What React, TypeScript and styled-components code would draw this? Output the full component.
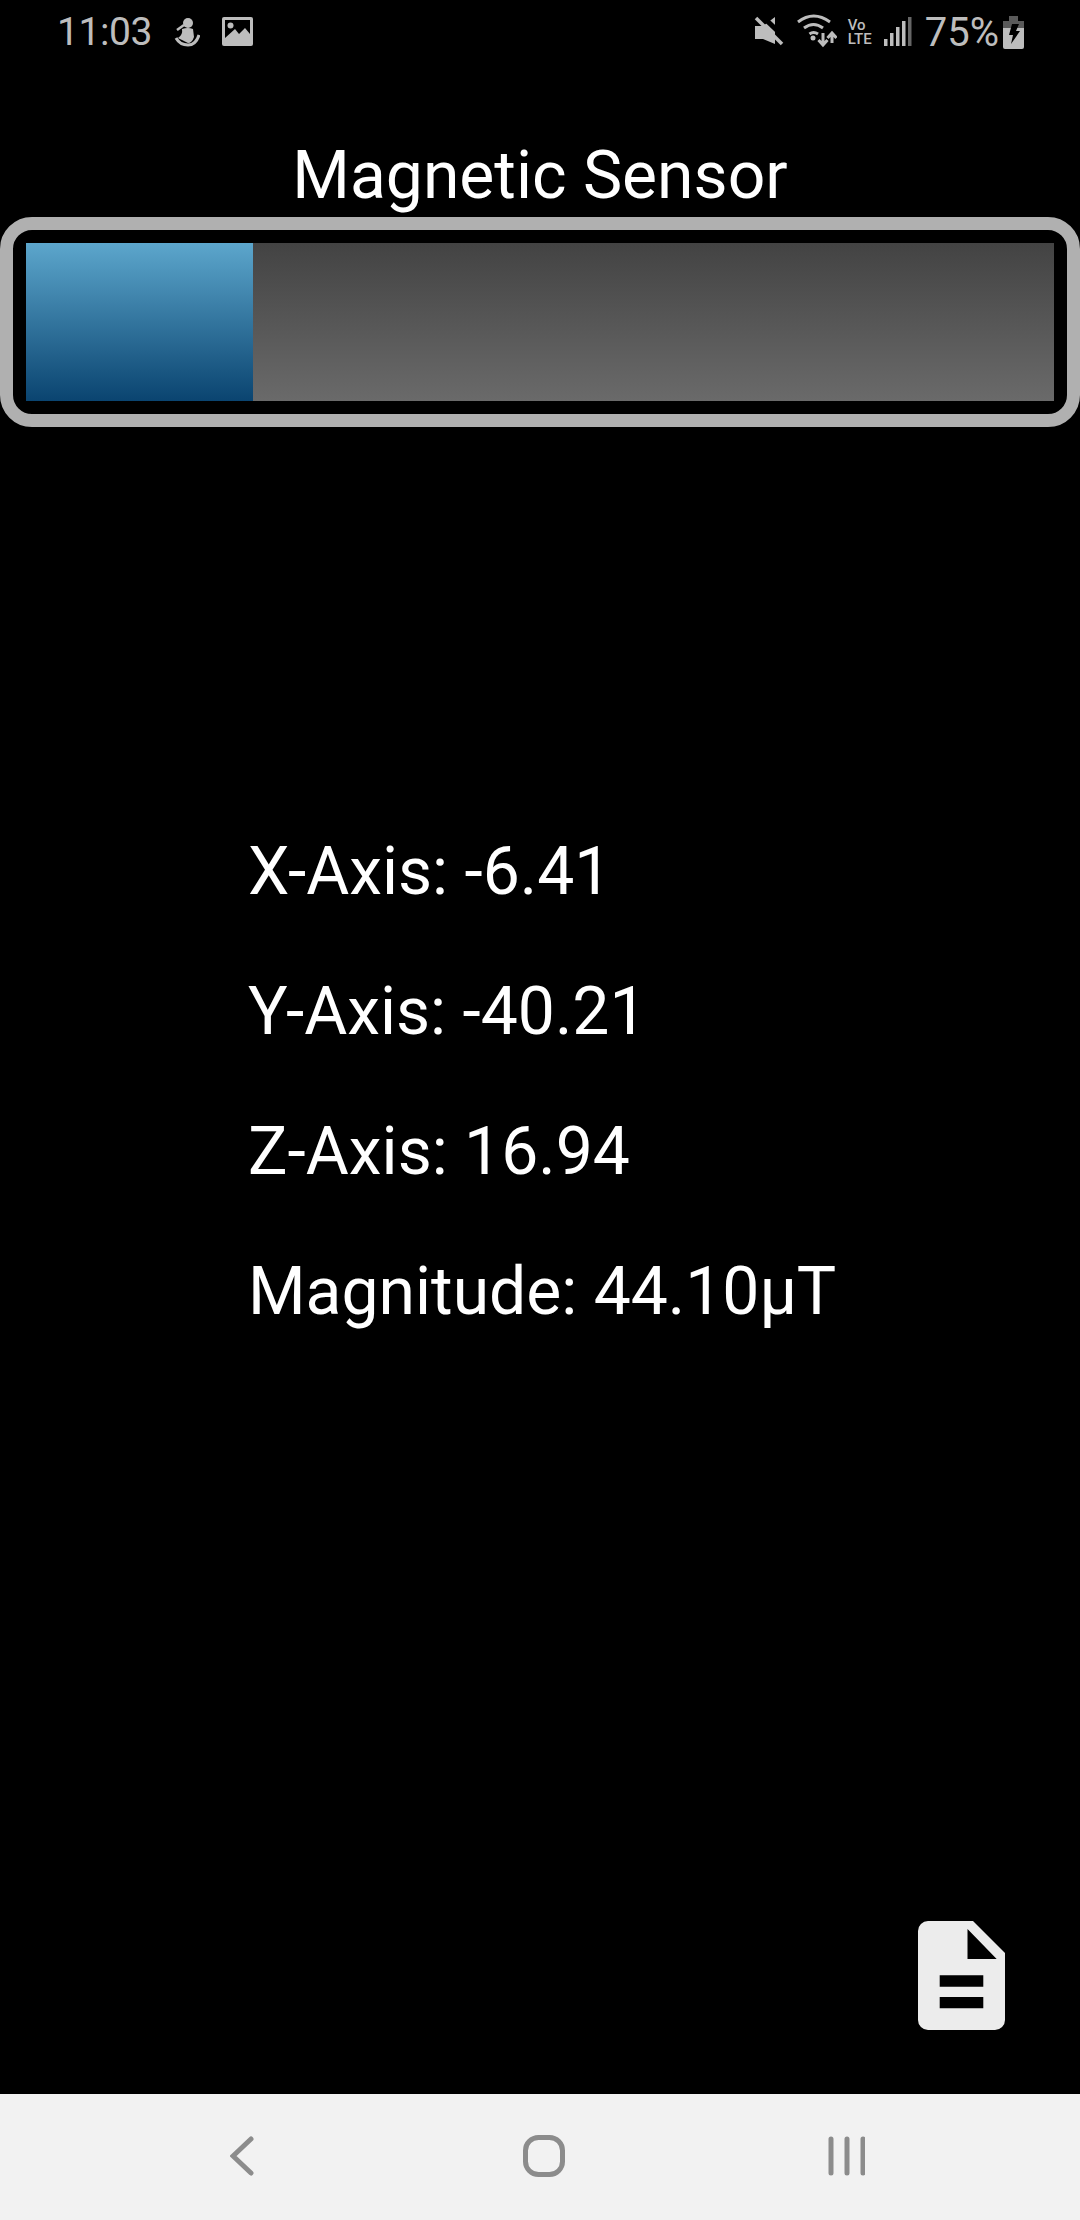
import styled, { createGlobalStyle } from 'styled-components'

const GlobalStyle = createGlobalStyle`
  html, body {
    margin: 0;
    padding: 0;
    background: #000;
  }
`

const Screen = styled.div`
  display: flex;
  flex-direction: column;
  width: 1080px;
  height: 2220px;
  background: #000;
  color: #fff;
  font-family: Roboto, "Liberation Sans", sans-serif;
  overflow: hidden;
`

const StatusBar = styled.div`
  display: flex;
  align-items: center;
  justify-content: space-between;
  height: 64px;
  padding: 0 56px 0 57px;
  color: #bdbdbd;
  font-size: 39px;
`

const StatusLeft = styled.div`
  display: flex;
  align-items: center;
  gap: 22px;
`

const StatusRight = styled.div`
  display: flex;
  align-items: center;
  gap: 11px;
`

const Clock = styled.span`
  letter-spacing: -0.4px;
`

const Volte = styled.div`
  display: flex;
  flex-direction: column;
  width: 25px;
  font-size: 15px;
  font-weight: 500;
  line-height: 14px;
`

const Battery = styled.span`
  margin-left: 2px;
  font-size: 40px;
`

const BatteryIcon = styled.svg`
  margin-left: -7px;
`

const Title = styled.h1`
  margin: 71px 0 0;
  height: 82px;
  font-size: 66px;
  font-weight: 400;
  line-height: 82px;
  text-align: center;
`

const Meter = styled.div`
  box-sizing: border-box;
  height: 210px;
  padding: 13px;
  border: 13px solid #b0b0b0;
  border-radius: 32px;
`

const Track = styled.div`
  height: 100%;
  background: linear-gradient(#434343, #6a6a6a);
`

const Fill = styled.div<{ $percent: number }>`
  width: ${(p) => p.$percent}%;
  height: 100%;
  background: linear-gradient(#5ca6cc, #0a4470);
`

const Readings = styled.div`
  display: flex;
  flex-direction: column;
  gap: 56px;
  margin-top: 403px;
  padding-left: 248px;
`

const Reading = styled.div`
  font-size: 66px;
  line-height: 84px;
`

const Spacer = styled.div`
  flex: 1;
`

const LogRow = styled.div`
  display: flex;
  justify-content: flex-end;
  padding: 0 75px 64px 0;
`

const NavBar = styled.div`
  box-sizing: border-box;
  display: flex;
  align-items: center;
  justify-content: space-between;
  height: 126px;
  padding: 0 215px 2px 230px;
  background: #f2f2f2;
`

const PersonIcon = () => (
  <svg width="26" height="30" viewBox="0 0 26 30" fill="#bdbdbd">
    <circle cx="14" cy="6" r="5" />
    <path d="M3 13L10 8" stroke="#bdbdbd" strokeWidth="2.5" fill="none" />
    <path d="M8 12Q14 10 19 12L20 20Q18 26 14 26L4 21Q9 18 8 12Z" />
    <path d="M2 21Q6 28 14 28Q22 28 25 18" stroke="#bdbdbd" strokeWidth="3" fill="none" />
  </svg>
)

const ImageIcon = () => (
  <svg width="31" height="30" viewBox="0 0 31 30">
    <rect width="31" height="29" rx="2" fill="#bdbdbd" />
    <path d="M3 3H28V17L23 11L17 17L13 12L3 21Z" fill="#000" />
    <circle cx="8.5" cy="8.5" r="3" fill="#bdbdbd" />
  </svg>
)

const MuteIcon = () => (
  <svg width="31" height="32" viewBox="0 0 31 32">
    <path d="M1 10H9L21 1V28L9 23H1Z" fill="#bdbdbd" />
    <path d="M6 -2L32 23" stroke="#000" strokeWidth="5" />
    <path d="M2 2L28 28" stroke="#bdbdbd" strokeWidth="3.5" />
  </svg>
)

const WifiIcon = () => (
  <svg width="41" height="36" viewBox="0 0 41 36" fill="none" stroke="#bdbdbd" strokeWidth="3">
    <path d="M2 8Q17.5 -4 34 8" />
    <path d="M8 14Q17.5 7 27 14" />
    <path d="M13.5 20Q17.5 17 22 20" />
    <circle cx="17" cy="24" r="2.5" fill="#bdbdbd" stroke="none" />
    <path d="M27 19V31M22.5 26L27 31L31.5 26" />
    <path d="M36 29V19M31.5 24L36 19L40.5 24" />
  </svg>
)

const SignalIcon = () => (
  <svg width="28" height="30" viewBox="0 0 28 30">
    <rect x="0" y="22" width="3.5" height="7" fill="#bdbdbd" />
    <rect x="6" y="16" width="3.5" height="13" fill="#bdbdbd" />
    <rect x="12" y="10" width="3.5" height="19" fill="#bdbdbd" />
    <rect x="18" y="4" width="3.5" height="25" fill="#bdbdbd" />
    <rect x="24" y="0" width="3.5" height="29" fill="#666" />
  </svg>
)

const ChargingIcon = () => (
  <BatteryIcon width="21" height="33" viewBox="0 0 21 33">
    <path d="M6 0H15V5H21V12H0V5H6Z" fill="#5a5a5a" />
    <path d="M0 12H21V31A2 2 0 0 1 19 33H2A2 2 0 0 1 0 31Z" fill="#bdbdbd" />
    <path d="M9 8H16L13 15H17L8 28L10 19H6Z" fill="#000" />
  </BatteryIcon>
)

const FileIcon = () => (
  <svg width="87" height="109" viewBox="0 0 87 109">
    <path
      fill="#ececec"
      fillRule="evenodd"
      d="M10 0H55L87 32V99A10 10 0 0 1 77 109H10A10 10 0 0 1 0 99V10A10 10 0 0 1 10 0ZM49.5 8V38H78.7ZM21.7 54.3V65.7H65.3V54.3ZM21.7 76V87.3H65.3V76Z"
    />
  </svg>
)

const BackIcon = () => (
  <svg width="30" height="40" viewBox="0 0 30 40" fill="none" stroke="#8c8c8c" strokeWidth="5" strokeLinecap="round">
    <path d="M21 3L3 20L21 37" />
  </svg>
)

const HomeIcon = () => (
  <svg width="42" height="42" viewBox="0 0 42 42" fill="none" stroke="#8c8c8c" strokeWidth="5">
    <rect x="2.5" y="2.5" width="37" height="37" rx="13" />
  </svg>
)

const RecentsIcon = () => (
  <svg width="37" height="40" viewBox="0 0 37 40" fill="none" stroke="#8c8c8c" strokeWidth="5" strokeLinecap="round">
    <path d="M3 3V37M19 3V37M35 3V37" />
  </svg>
)

const App = () => {
  return (
    <Screen>
      <GlobalStyle />
      <StatusBar>
        <StatusLeft>
          <Clock>11:03</Clock>
          <PersonIcon />
          <ImageIcon />
        </StatusLeft>
        <StatusRight>
          <MuteIcon />
          <WifiIcon />
          <Volte>
            <span>Vo</span>
            <span>LTE</span>
          </Volte>
          <SignalIcon />
          <Battery>75%</Battery>
          <ChargingIcon />
        </StatusRight>
      </StatusBar>
      <Title>Magnetic Sensor</Title>
      <Meter>
        <Track>
          <Fill $percent={22.1} />
        </Track>
      </Meter>
      <Readings>
        <Reading>X-Axis: -6.41</Reading>
        <Reading>Y-Axis: -40.21</Reading>
        <Reading>Z-Axis: 16.94</Reading>
        <Reading>Magnitude: 44.10µT</Reading>
      </Readings>
      <Spacer />
      <LogRow>
        <FileIcon />
      </LogRow>
      <NavBar>
        <BackIcon />
        <HomeIcon />
        <RecentsIcon />
      </NavBar>
    </Screen>
  )
}

export default App
